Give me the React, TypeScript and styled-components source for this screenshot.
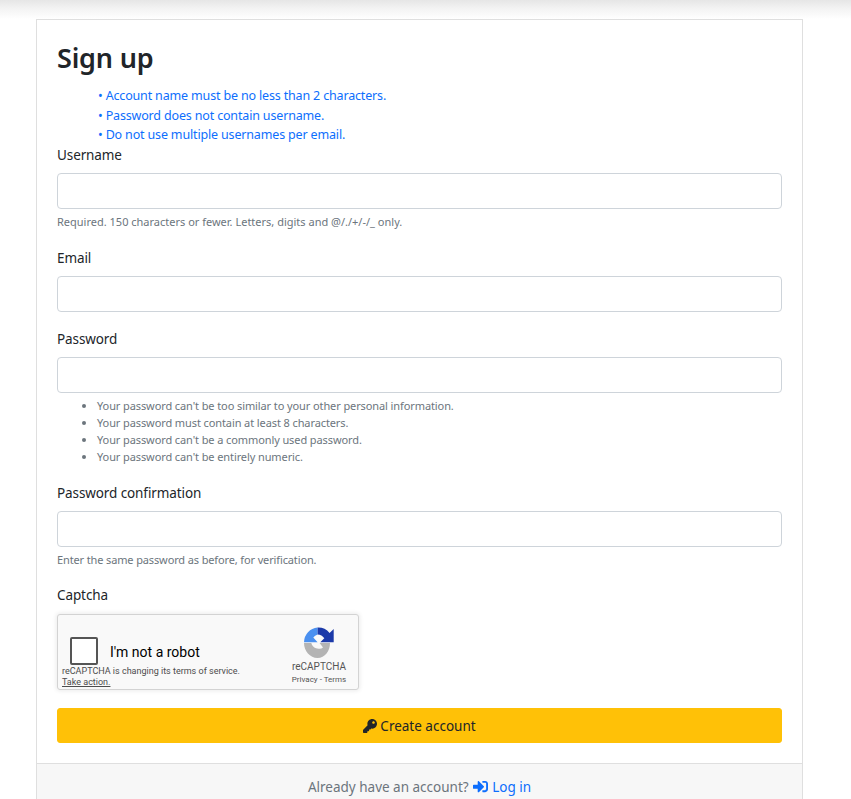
import styled, { createGlobalStyle } from 'styled-components';
import { FaKey, FaSignInAlt } from 'react-icons/fa';

const GlobalStyle = createGlobalStyle`
  html, body {
    margin: 0;
    padding: 0;
    height: 799px;
    overflow: hidden;
    background: #fff;
    font-family: 'Noto Sans', 'Open Sans', sans-serif;
    color: #212529;
  }
`;

const TopShade = styled.div`
  height: 19px;
  background: linear-gradient(to bottom, #e6e6e6 0%, #f3f3f3 45%, #ffffff 100%);
`;

const Card = styled.div`
  width: 767px;
  margin-left: 36px;
  box-sizing: border-box;
  border: 1px solid #dfdfdf;
`;

const CardBody = styled.div`
  padding: 21px 20px 20px 20px;
`;

const Title = styled.h3`
  margin: 0 0 11px;
  font-size: 27px;
  line-height: 34px;
  font-weight: 600;
  letter-spacing: -0.2px;
  color: #212529;
`;

const Notes = styled.div`
  padding-left: 41px;
`;

const Note = styled.div`
  font-size: 12.5px;
  line-height: 19.5px;
  letter-spacing: -0.16px;
  color: #0d6efd;
`;

const Field = styled.div<{ $gap: number }>`
  margin-bottom: ${props => props.$gap}px;
`;

const Label = styled.label`
  display: block;
  font-size: 13.5px;
  line-height: 20px;
  letter-spacing: -0.1px;
  margin-bottom: 8px;
`;

const Input = styled.input`
  display: block;
  width: 100%;
  height: 36px;
  box-sizing: border-box;
  border: 1px solid #ced4da;
  border-radius: 4px;
  background: #fff;
  outline: none;
`;

const Help = styled.div<{ $spacing: number }>`
  margin-top: 4px;
  font-size: 11px;
  line-height: 17px;
  letter-spacing: ${props => props.$spacing}px;
  color: #6c757d;
`;

const HelpList = styled.ul`
  margin: 4px 0 0;
  padding-left: 40px;
  font-size: 11px;
  line-height: 17px;
  letter-spacing: -0.1px;
  color: #6c757d;
`;

const Captcha = styled.div`
  display: flex;
  justify-content: space-between;
  width: 302px;
  height: 76px;
  margin-top: 9px;
  box-sizing: border-box;
  background: #f9f9f9;
  border: 1px solid #d3d3d3;
  border-radius: 3px;
  box-shadow: 0 0 4px 1px rgba(0, 0, 0, 0.08);
  font-family: Roboto, sans-serif;
`;

const CaptchaMain = styled.div`
  display: flex;
  flex-direction: column;
  padding: 22px 0 0 4px;
`;

const CheckRow = styled.div`
  display: flex;
  align-items: center;
  gap: 12px;
  padding-left: 8px;
  height: 28px;
`;

const CheckBox = styled.div`
  width: 28px;
  height: 28px;
  box-sizing: border-box;
  background: #fff;
  border: 2px solid #555;
  border-radius: 2px;
`;

const RobotText = styled.span`
  padding-top: 2px;
  font-size: 14px;
  line-height: 28px;
  color: #000;
`;

const Terms = styled.div`
  margin-top: 1px;
  font-size: 9px;
  line-height: 11px;
  color: #4c4c4c;
`;

const TermsLink = styled.span`
  text-decoration: underline;
`;

const CaptchaBrand = styled.div`
  display: flex;
  flex-direction: column;
  align-items: center;
  width: 70px;
  padding: 12px 4px 0 0;
`;

const BrandName = styled.div`
  margin-top: 1px;
  font-size: 10px;
  line-height: 13px;
  color: #555;
`;

const BrandLinks = styled.div`
  font-size: 8px;
  line-height: 13px;
  color: #555;
`;

const SubmitButton = styled.button`
  display: flex;
  align-items: center;
  justify-content: center;
  gap: 3px;
  width: 100%;
  height: 35px;
  margin-top: 18px;
  padding: 2px 0 0;
  border: 1px solid #ffc107;
  border-radius: 3px;
  background: #ffc107;
  color: #212529;
  font-family: inherit;
  font-size: 13.5px;
`;

const CardFooter = styled.div`
  border-top: 1px solid #dfdfdf;
  background: #f7f7f7;
  height: 60px;
  padding-top: 13px;
  text-align: center;
  font-size: 13.5px;
  line-height: 20px;
  color: #6c757d;
`;

const FooterLink = styled.a`
  margin-left: 1px;
  color: #0d6efd;
  text-decoration: none;

  svg {
    vertical-align: -2px;
    margin-right: 4px;
  }
`;

const RecaptchaLogo = () => (
  <svg width="30" height="32" viewBox="0 0 30 32">
    <path d="M0 15.3 A15 15 0 0 1 13.6 0.6 V7.6 A8 8 0 0 0 9.3 10.6 L13.6 15.3 Z" fill="#4a90f0" />
    <path d="M13.6 0.6 A15 15 0 0 1 25.6 5.9 L29.7 2 V15.3 H16.3 L20.3 11.3 A8.5 8.5 0 0 0 13.6 7.6 Z" fill="#1c3aa9" />
    <path d="M0 16 H7.3 A7.5 7.5 0 0 0 19 20.4 L15.6 16 H26 C26 24 21 31 13.5 31 C6 31 0 24 0 16 Z" fill="#b4b4b4" />
  </svg>
);

const App = () => {
  return (
    <>
      <GlobalStyle />
      <TopShade />
      <Card>
        <CardBody>
          <Title>Sign up</Title>
          <Notes>
            <Note>• Account name must be no less than 2 characters.</Note>
            <Note>• Password does not contain username.</Note>
            <Note>• Do not use multiple usernames per email.</Note>
          </Notes>
          <Field $gap={18}>
            <Label>Username</Label>
            <Input type="text" />
            <Help $spacing={0}>Required. 150 characters or fewer. Letters, digits and @/./+/-/_ only.</Help>
          </Field>
          <Field $gap={17}>
            <Label>Email</Label>
            <Input type="email" />
          </Field>
          <Field $gap={18}>
            <Label>Password</Label>
            <Input type="password" />
            <HelpList>
              <li>Your password can't be too similar to your other personal information.</li>
              <li>Your password must contain at least 8 characters.</li>
              <li>Your password can't be a commonly used password.</li>
              <li>Your password can't be entirely numeric.</li>
            </HelpList>
          </Field>
          <Field $gap={17}>
            <Label>Password confirmation</Label>
            <Input type="password" />
            <Help $spacing={-0.13}>Enter the same password as before, for verification.</Help>
          </Field>
          <Label>Captcha</Label>
          <Captcha>
            <CaptchaMain>
              <CheckRow>
                <CheckBox />
                <RobotText>I'm not a robot</RobotText>
              </CheckRow>
              <Terms>
                reCAPTCHA is changing its terms of service.
                <br />
                <TermsLink>Take action.</TermsLink>
              </Terms>
            </CaptchaMain>
            <CaptchaBrand>
              <RecaptchaLogo />
              <BrandName>reCAPTCHA</BrandName>
              <BrandLinks>Privacy - Terms</BrandLinks>
            </CaptchaBrand>
          </Captcha>
          <SubmitButton>
            <FaKey size={14} />
            Create account
          </SubmitButton>
        </CardBody>
        <CardFooter>
          Already have an account?{' '}
          <FooterLink href="#">
            <FaSignInAlt size={15} />
            Log in
          </FooterLink>
        </CardFooter>
      </Card>
    </>
  );
};

export default App;
